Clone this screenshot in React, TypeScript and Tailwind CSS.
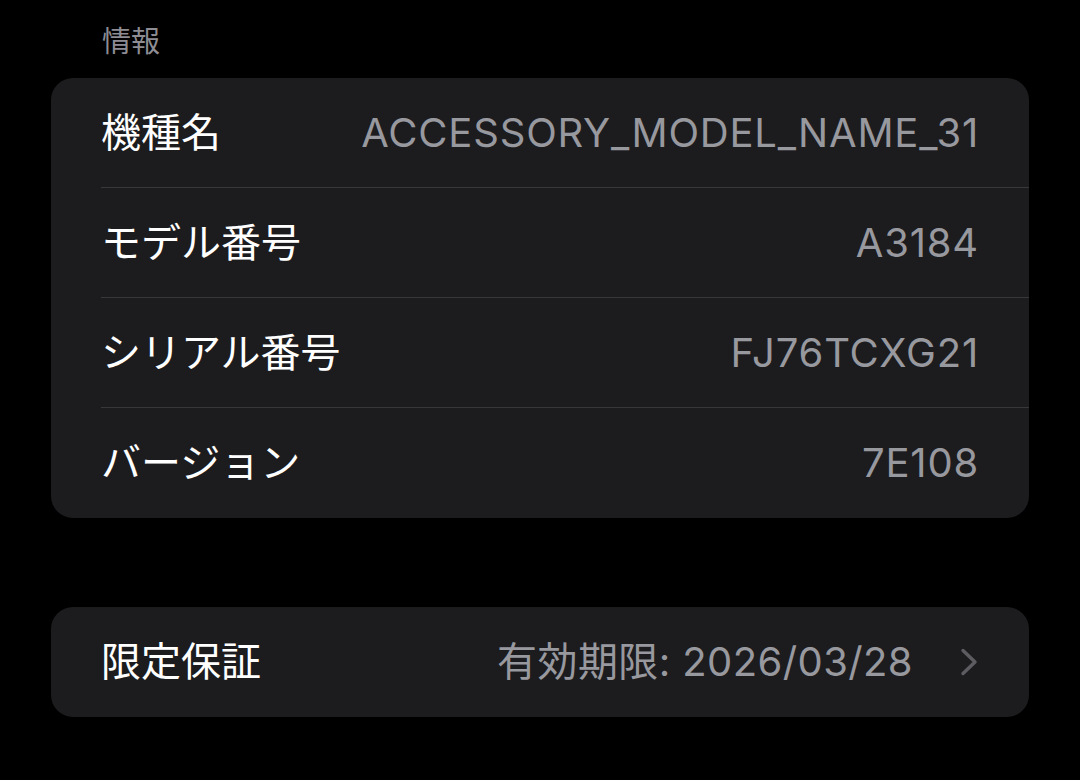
interface InfoRow {
  label: string;
  value: string;
}

const rows: InfoRow[] = [
  { label: '機種名', value: 'ACCESSORY_MODEL_NAME_31' },
  { label: 'モデル番号', value: 'A3184' },
  { label: 'シリアル番号', value: 'FJ76TCXG21' },
  { label: 'バージョン', value: '7E108' },
];

const font = { fontFamily: 'Inter, "Noto Sans CJK JP", sans-serif' };

function Chevron() {
  return (
    <svg width="18" height="28" viewBox="0 0 18 28" fill="none">
      <polyline
        points="3,2.5 15,14 3,25.5"
        stroke="#5c5c61"
        strokeWidth="3.4"
        strokeLinecap="round"
        strokeLinejoin="round"
      />
    </svg>
  );
}

export default function App() {
  return (
    <div className="w-[1080px] h-[780px] bg-black overflow-hidden" style={font}>
      <div className="px-[51px]">
        {/* Section header */}
        <div className="h-[78px] pl-[51px] pt-[23px] text-[29px] leading-[38px] text-[#8d8d93]">情報</div>

        {/* Info card */}
        <div className="bg-[#1c1c1e] rounded-[22px]">
          {rows.map((r, i) => (
            <div key={r.label} className="pl-[50px]">
              <div
                className={`h-[110px] flex items-center justify-between pr-[50px] ${
                  i < rows.length - 1 ? 'border-b border-[#38383a]' : ''
                }`}
              >
                <span className="text-[40px] text-white">{r.label}</span>
                <span className="text-[40px] tracking-[0.02em] text-[#98989f]">{r.value}</span>
              </div>
            </div>
          ))}
        </div>

        {/* Warranty card */}
        <div className="mt-[89px] bg-[#1c1c1e] rounded-[22px] h-[110px] flex items-center justify-between pl-[50px] pr-[51px]">
          <span className="text-[40px] text-white">限定保証</span>
          <div className="flex items-center gap-[47px]">
            <span className="text-[40px] tracking-[0.01em] text-[#98989f]">有効期限: 2026/03/28</span>
            <Chevron />
          </div>
        </div>
      </div>
    </div>
  );
}
